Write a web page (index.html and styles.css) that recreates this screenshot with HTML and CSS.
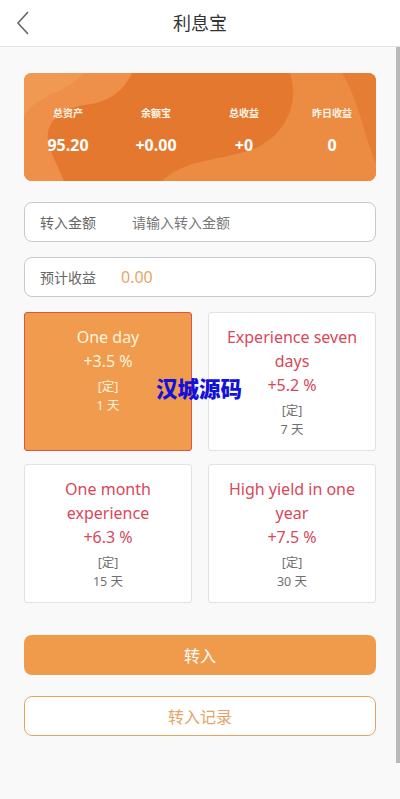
FILE: index.html
```html
<!DOCTYPE html>
<html>
    <head>
        <meta charset="UTF-8">
        <title>利息宝</title>
        <link rel="stylesheet" href="styles.css">
    </head>
    <body>
        <div class="top">
            <span class="back">
                <svg width="14" height="24" viewBox="0 0 14 24"><path d="M12 1 L2 12 L12 23" fill="none" stroke="#666" stroke-width="1.6"/></svg>
            </span>
            <h1>利息宝</h1>
        </div>
        <div class="main">
            <div class="banner">
                <svg class="waves" viewBox="0 0 352 108" preserveAspectRatio="none">
                    <rect width="352" height="108" fill="#e5782f"/>
                    <path d="M0 0 L108 0 C98 22 80 30 60 32 C36 36 22 50 24 66 C26 82 36 96 40 108 L0 108 Z" fill="#ee9049"/>
                    <path d="M0 0 L60 0 C50 12 34 18 18 26 C8 32 2 38 0 44 Z" fill="#f1a05a" opacity="0.6"/>
                    <path d="M266 0 C276 30 262 62 230 76 C196 88 160 86 138 108 L352 108 L352 0 Z" fill="#ec8b42"/>
                    <path d="M318 0 C336 30 342 70 352 90 L352 0 Z" fill="#e67d34"/>
                </svg>
                <div class="stat"><p class="lbl">总资产</p><p class="num">95.20</p></div>
                <div class="stat"><p class="lbl">余额宝</p><p class="num">+0.00</p></div>
                <div class="stat"><p class="lbl">总收益</p><p class="num">+0</p></div>
                <div class="stat"><p class="lbl">昨日收益</p><p class="num">0</p></div>
            </div>
            <div class="field">
                <span class="flbl">转入金额</span>
                <span class="ph">请输入转入金额</span>
            </div>
            <div class="field">
                <span class="flbl">预计收益</span>
                <span class="earn">0.00</span>
            </div>
            <div class="plans">
                <div class="plan on">
                    <p class="pname">One day</p>
                    <p class="rate">+3.5 %</p>
                    <p class="tag">[定]</p>
                    <p class="days">1 天</p>
                </div>
                <div class="plan">
                    <p class="pname">Experience seven days</p>
                    <p class="rate">+5.2 %</p>
                    <p class="tag">[定]</p>
                    <p class="days">7 天</p>
                </div>
                <div class="plan">
                    <p class="pname">One month experience</p>
                    <p class="rate">+6.3 %</p>
                    <p class="tag">[定]</p>
                    <p class="days">15 天</p>
                </div>
                <div class="plan">
                    <p class="pname">High yield in one year</p>
                    <p class="rate">+7.5 %</p>
                    <p class="tag">[定]</p>
                    <p class="days">30 天</p>
                </div>
            </div>
            <div class="btn">转入</div>
            <div class="btn line">转入记录</div>
        </div>
        <div class="mark">汉城源码</div>
        <div class="thumb"></div>
    </body>
</html>
```
FILE: styles.css
```css
*{
    padding:0;
    margin:0;
    box-sizing:border-box;
}
body{
    width:400px;
    height:799px;
    overflow:hidden;
    background:#f9f9f9;
    font-family:"Noto Sans","Noto Sans CJK SC",sans-serif;
    position:relative;
}
.top{
    height:47px;
    background:#fff;
    border-bottom:1px solid #e4e4e4;
    display:flex;
    align-items:center;
    justify-content:center;
    position:relative;
}
.top h1{
    font-size:18px;
    font-weight:normal;
    color:#333;
    margin-top:-2px;
}
.back{
    position:absolute;
    left:16px;
    top:11px;
}
.main{
    padding:26px 24px 0 24px;
}
.banner{
    height:108px;
    border-radius:8px;
    overflow:hidden;
    position:relative;
    display:flex;
    padding-top:31px;
}
.waves{
    position:absolute;
    left:0;
    top:0;
    width:100%;
    height:100%;
}
.stat{
    flex:1;
    text-align:center;
    color:#fff;
    position:relative;
}
.lbl{
    font-size:10px;
    line-height:18px;
    font-weight:bold;
    color:#fff4e8;
}
.num{
    font-size:16px;
    line-height:20px;
    font-weight:bold;
    margin-top:13px;
}
.field{
    height:40px;
    margin-top:21px;
    background:#fff;
    border:1px solid #c8c8c8;
    border-radius:8px;
    display:flex;
    align-items:center;
    padding-left:15px;
    font-size:14px;
}
.field + .field{
    margin-top:15px;
}
.flbl{
    color:#666;
    width:92px;
}
.ph{
    color:#777;
}
.earn{
    color:#e6a567;
    font-size:16px;
    margin-left:-11px;
}
.plans{
    margin-top:15px;
    display:grid;
    grid-template-columns:168px 168px;
    column-gap:16px;
    row-gap:13px;
}
.plan{
    height:139px;
    background:#fff;
    border:1px solid #e2e2e2;
    border-radius:3px;
    text-align:center;
    padding:12px 10px 0 10px;
}
.plan.on{
    background:#f09b4e;
    border-color:#dc5440;
}
.pname,.rate{
    font-size:16px;
    line-height:24px;
    color:#d8485a;
}
.tag,.days{
    font-size:12.5px;
    line-height:19px;
    color:#707070;
}
.tag{
    margin-top:4px;
}
.plan.on .pname,.plan.on .rate,.plan.on .tag,.plan.on .days{
    color:#fff3dc;
}
.btn{
    height:40px;
    margin-top:32px;
    border-radius:8px;
    background:#f09b4c;
    color:#fff;
    font-size:16px;
    display:flex;
    align-items:center;
    justify-content:center;
}
.btn.line{
    margin-top:21px;
    background:#fff;
    border:1px solid #e3a468;
    color:#e3a468;
}
.mark{
    position:absolute;
    left:156px;
    top:376px;
    font-size:21.5px;
    line-height:26px;
    font-weight:900;
    color:#1412d8;
}
.thumb{
    position:absolute;
    right:0;
    top:47px;
    width:4px;
    height:716px;
    background:#b9b9b9;
}
```
